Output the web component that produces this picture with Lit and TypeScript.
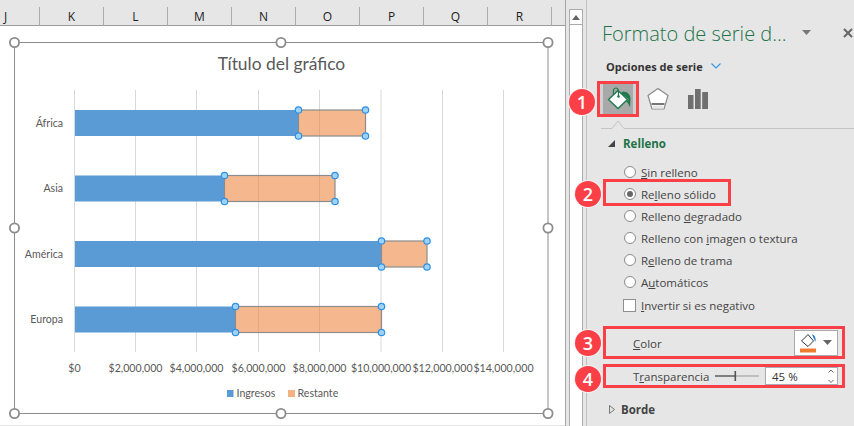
import { LitElement, html, css, svg } from "lit";
import { customElement } from "lit/decorators.js";

const GRID = [74.5, 135.5, 196.5, 258.5, 319.5, 381, 442.5, 503.5];
const AXIS = ["$0", "$2,000,000", "$4,000,000", "$6,000,000", "$8,000,000", "$10,000,000", "$12,000,000", "$14,000,000"];
const BARS = [
  { name: "África", y: 111, h: 26, mid: 298.5, end: 365.5 },
  { name: "Asia", y: 176.5, h: 26, mid: 224.5, end: 335 },
  { name: "América", y: 242, h: 26, mid: 381.5, end: 427 },
  { name: "Europa", y: 307.5, h: 26, mid: 235.5, end: 381.5 },
];
const COLS = ["K", "L", "M", "N", "O", "P", "Q", "R"];
const HANDLES = [
  [14.5, 43.5], [281, 43.5], [548, 43.5],
  [14.5, 229], [548, 229],
  [14.5, 414.5], [281, 414.5], [548, 414.5],
];

@customElement("app-root")
export class AppRoot extends LitElement {
  static styles = css`
    :host { display: block; width: 854px; height: 426px; overflow: hidden; background: #e6e6e6; font-family: "Open Sans", "Noto Sans", sans-serif; color: #444; }
    .page { display: flex; height: 426px; }
    .sheet { width: 565px; flex: none; display: flex; flex-direction: column; border-right: 1px solid #a6a6a6; }
    .cols { display: flex; height: 26px; flex: none; padding-top: 7px; box-sizing: border-box; border-bottom: 1px solid #9a9a9a; font-size: 12px; line-height: 19px; color: #222; }
    .col { width: 64px; flex: none; text-align: center; border-right: 1px solid #ababab; box-sizing: border-box; height: 19px; }
    .col.first { width: 40px; text-align: left; padding-left: 4px; }
    .chart { display: block; background: #fff; width: 565px; height: 399px; font-family: Lato, Carlito, sans-serif; }
    .scroll { width: 14px; margin: 9px 0 0 3px; flex: none; box-sizing: border-box; background: #fff; border: 1px solid #ababab; border-bottom: 0; height: 430px; }
    .scroll-up { height: 14px; border-bottom: 1px solid #ababab; display: flex; align-items: center; justify-content: center; }
    .panel { margin-left: 3px; flex: 1; min-width: 0; border-left: 1px solid #c0c0c0; padding-left: 14px; box-sizing: border-box; display: flex; flex-direction: column; position: relative; }
    .head { display: flex; align-items: center; height: 30px; margin: 18px 0 0 1px; color: #217346; font-size: 20px; font-weight: 300; white-space: nowrap; }
    .head span { width: 200px; flex: none; }
    .head svg { flex: none; }
    .head .close { margin-left: 32px; }
    .sub { display: flex; align-items: center; gap: 8px; margin: 8px 0 0 5px; height: 20px; font-size: 11px; font-weight: 700; color: #333; }
    .tabs { display: flex; align-items: center; margin: 5px 0 0 -4px; height: 36px; }
    .tab-on { position: relative; width: 42px; height: 36px; box-sizing: border-box; border: 3px solid #fb3f46; background: #a9a9a9; display: flex; align-items: center; justify-content: center; box-shadow: inset 3px 0 0 #d0d0d0, inset -3px 0 0 #d0d0d0; }
    .tab { display: flex; margin-left: 8px; }
    .tab + .tab { margin-left: 19px; }
    .rule { display: block; margin: 3px 0 0 0; flex: none; }
    .section { display: flex; align-items: center; gap: 8px; height: 18px; margin: 5px 0 0 7px; font-size: 11.5px; font-weight: 700; color: #217346; }
    .options { display: flex; flex-direction: column; margin: 9px 0 0 23px; font-size: 11.5px; color: #444; }
    .opt { display: flex; align-items: center; gap: 5px; height: 22px; white-space: nowrap; }
    .radio { width: 12px; height: 12px; border-radius: 50%; box-sizing: border-box; border: 1px solid #8a8a8a; background: #fff; flex: none; display: flex; align-items: center; justify-content: center; }
    .radio i { width: 6px; height: 6px; border-radius: 50%; background: #666; }
    .boxed { position: relative; }
    .boxed::after { content: ""; position: absolute; left: -21px; top: -4px; width: 128px; height: 27px; box-sizing: border-box; border: 3px solid #fb3f46; }
    .check { display: flex; align-items: center; gap: 5px; margin: 3px 0 0 22px; height: 19px; font-size: 11.5px; }
    .check i { width: 13px; height: 13px; box-sizing: border-box; border: 1px solid #8f8f8f; background: #fff; flex: none; }
    .mark { position: relative; margin-left: 2px; width: 242px; box-sizing: border-box; border: 3px solid #fb3f46; display: flex; align-items: center; font-size: 11.5px; }
    .mark-color { height: 33px; margin-top: 11px; padding: 0 4px 0 27px; justify-content: space-between; }
    .color-label { padding-top: 2px; }
    .mark-trans { height: 24px; margin-top: 5px; padding: 0 4px 0 27px; }
    .trans-label { width: 82px; flex: none; white-space: nowrap; }
    .color-btn { width: 44px; height: 26px; box-sizing: border-box; background: #fff; border: 1px solid #ababab; display: flex; align-items: center; justify-content: center; gap: 5px; }
    .slider { display: block; flex: none; }
    .spin { margin-left: 6px; width: 73px; height: 18px; box-sizing: border-box; background: #fff; border: 1px solid #ababab; display: flex; align-items: center; justify-content: space-between; padding: 0 3px 0 6px; color: #333; }
    .border { display: flex; align-items: center; gap: 6px; height: 18px; margin: 12px 0 0 8px; font-size: 11.5px; font-weight: 700; color: #444; }
    .badge { position: absolute; width: 26px; height: 26px; border-radius: 50%; background: #fb3f46; color: #fff; font-size: 18px; font-weight: 600; display: flex; align-items: center; justify-content: center; box-shadow: 0 0 0 1px #f3f3f3; z-index: 2; font-family: "Open Sans", sans-serif; }
    .b1 { left: -31px; top: 5px; }
    .b2 { left: -49px; top: -2px; }
    .b3 { left: -31px; top: 1px; }
    .b4 { left: -31px; top: -1px; }
    .bucket { overflow: visible; margin-left: -1px; }
    u { text-underline-offset: 1px; }
  `;

  private chart() {
    const handle = (x: number, y: number) => svg`<circle cx=${x} cy=${y} r="3.2" fill="#9fd2f7" stroke="#2f8fe3" stroke-width="1.2"></circle>`;
    return html`<svg class="chart" viewBox="0 27 565 399">
      <rect x="14.5" y="43.5" width="533.5" height="371" fill="#fff" stroke="#8c8c8c" stroke-width="1"></rect>
      <text x="281.5" y="70.5" font-size="17.4" fill="#595959" text-anchor="middle">Título del gráfico</text>
      ${GRID.map((x) => svg`<line x1=${x} x2=${x} y1="91" y2="353" stroke="#d9d9d9"></line>`)}
      ${BARS.map((b) => svg`
        <text x="63" y=${b.y + 16.5} font-size="10.6" fill="#595959" text-anchor="end">${b.name}</text>
        <rect x="75" y=${b.y} width=${b.mid - 75} height=${b.h} fill="#5b9bd5"></rect>
        <rect x=${b.mid} y=${b.y} width=${b.end - b.mid} height=${b.h} fill="#ed7d31" fill-opacity=".55" stroke="#8c8c8c" stroke-width="1.2"></rect>
        ${handle(b.mid, b.y)}${handle(b.end, b.y)}${handle(b.mid, b.y + b.h)}${handle(b.end, b.y + b.h)}
      `)}
      ${AXIS.map((t, i) => svg`<text x=${GRID[i]} y="373" font-size="10.6" fill="#595959" text-anchor="middle">${t}</text>`)}
      <rect x="227" y="391" width="6.5" height="7" fill="#5b9bd5"></rect>
      <text x="236.5" y="398" font-size="10.6" fill="#595959">Ingresos</text>
      <rect x="288" y="391" width="7" height="7" fill="#f4b183"></rect>
      <text x="297.5" y="398" font-size="10.6" fill="#595959">Restante</text>
      ${HANDLES.map(([x, y]) => svg`<circle cx=${x} cy=${y} r="4.6" fill="#fff" stroke="#8c8c8c" stroke-width="1.8"></circle>`)}
    </svg>`;
  }

  render() {
    return html`<div class="page">
      <div class="sheet">
        <div class="cols">
          <div class="col first">J</div>
          ${COLS.map((c) => html`<div class="col">${c}</div>`)}
        </div>
        ${this.chart()}
      </div>
      <div class="scroll">
        <div class="scroll-up"><svg width="8" height="5" viewBox="0 0 8 5"><path d="M0 5 4 0 8 5Z" fill="#666"></path></svg></div>
      </div>
      <div class="panel">
        <div class="head">
          <span>Formato de serie d...</span>
          <svg width="9" height="6" viewBox="0 0 9 6"><path d="M0 0H9L4.5 5Z" fill="#777"></path></svg>
          <svg class="close" width="10" height="10" viewBox="0 0 10 10"><path d="M1 1 9 9M9 1 1 9" stroke="#666" stroke-width="2"></path></svg>
        </div>
        <div class="sub">Opciones de serie
          <svg width="10" height="6" viewBox="0 0 10 6"><path d="M.5.5 5 5 9.5.5" fill="none" stroke="#3a96dd" stroke-width="1.2"></path></svg>
        </div>
        <div class="tabs">
          <div class="tab-on">
            <div class="badge b1">1</div>
            <svg class="bucket" width="24" height="24" viewBox="0 0 24 24">
              <path d="M2.500 12.500 12 3.500 21.500 12.500 12 21.500Z" fill="#fff" stroke="#1f7a4d" stroke-width="1.4"></path>
              <path d="M7.500 7.500C6.800 3 7.800 1 10 1S12.500 3 12.500 9" fill="none" stroke="#1f7a4d" stroke-width="1.2"></path>
              <circle cx="12.500" cy="9.500" r="1.300" fill="#1f7a4d"></circle>
              <path d="M17 4.500C21 4.500 25 8 24.500 12L24 20 21.500 15.500 20 14.500 23 12.500 15 6Z" fill="#1f7a4d"></path>
            </svg>
          </div>
          <div class="tab">
            <svg width="22" height="24" viewBox="0 0 22 24">
              <path d="M11 1.500 21 8.500 17 22H5L1 8.500Z" fill="#fff" stroke="#8a8a8a" stroke-width="1.2"></path>
              <path d="M4.500 17H17.500" stroke="#777" stroke-width="2"></path>
              <path d="M5.500 18.500H16.500V21.500H5.500Z" fill="#e6e6e6"></path>
            </svg>
          </div>
          <div class="tab">
            <svg width="20" height="20" viewBox="0 0 20 20"><path d="M0 6H5.500V20H0ZM7 0H12.700V20H7ZM14.200 3H20V20H14.200Z" fill="#6f6f6f"></path></svg>
          </div>
        </div>
        <svg class="rule" width="253" height="9" viewBox="0 0 253 9"><path d="M0 8.500H11L17 1 23 8.500H253" fill="none" stroke="#c4c4c4"></path></svg>
        <div class="section"><svg width="7" height="7" viewBox="0 0 7 7"><path d="M7 0V7H0Z" fill="#444"></path></svg>Relleno</div>
        <div class="options">
          <div class="opt"><span class="radio"></span><span><u>S</u>in relleno</span></div>
          <div class="opt boxed"><div class="badge b2">2</div><span class="radio"><i></i></span><span>Re<u>l</u>leno sólido</span></div>
          <div class="opt"><span class="radio"></span><span>Relleno <u>d</u>egradado</span></div>
          <div class="opt"><span class="radio"></span><span>Relleno con <u>i</u>magen o textura</span></div>
          <div class="opt"><span class="radio"></span><span>R<u>e</u>lleno de trama</span></div>
          <div class="opt"><span class="radio"></span><span>A<u>u</u>tomáticos</span></div>
        </div>
        <div class="check"><i></i><span><u>I</u>nvertir si es negativo</span></div>
        <div class="mark mark-color">
          <div class="badge b3">3</div>
          <span class="color-label"><u>C</u>olor</span>
          <div class="color-btn">
            <svg width="18" height="20" viewBox="0 0 18 20">
              <path d="M1.500 8 8 1.500 13.500 8 8 13.500Z" fill="#fff" stroke="#333"></path>
              <path d="M12 1.500C15 2 16 5 15.500 9L13.500 5Z" fill="#1f7fd0"></path>
              <rect x="0" y="15.500" width="16" height="4" fill="#ed7d31"></rect>
            </svg>
            <svg width="9" height="5" viewBox="0 0 9 5"><path d="M0 0H9L4.500 5Z" fill="#666"></path></svg>
          </div>
        </div>
        <div class="mark mark-trans">
          <div class="badge b4">4</div>
          <span class="trans-label">T<u>r</u>ansparencia</span>
          <svg class="slider" width="44" height="12" viewBox="0 0 44 12">
            <path d="M0 6H20" stroke="#666" stroke-width="1.6"></path>
            <path d="M20 6H44" stroke="#999" stroke-width="1"></path>
            <rect x="19.500" y="1" width="1.600" height="10" fill="#555"></rect>
          </svg>
          <div class="spin"><span>45 %</span>
            <svg width="6" height="15" viewBox="0 0 6 15"><path d="M.5 3.500 3 1 5.500 3.500M.5 11 3 13.500 5.500 11" fill="none" stroke="#666"></path></svg>
          </div>
        </div>
        <div class="border"><svg width="6" height="9" viewBox="0 0 6 9"><path d="M.5.5 5.500 4.500.5 8.500Z" fill="none" stroke="#777"></path></svg>Borde</div>
      </div>
    </div>`;
  }
}
